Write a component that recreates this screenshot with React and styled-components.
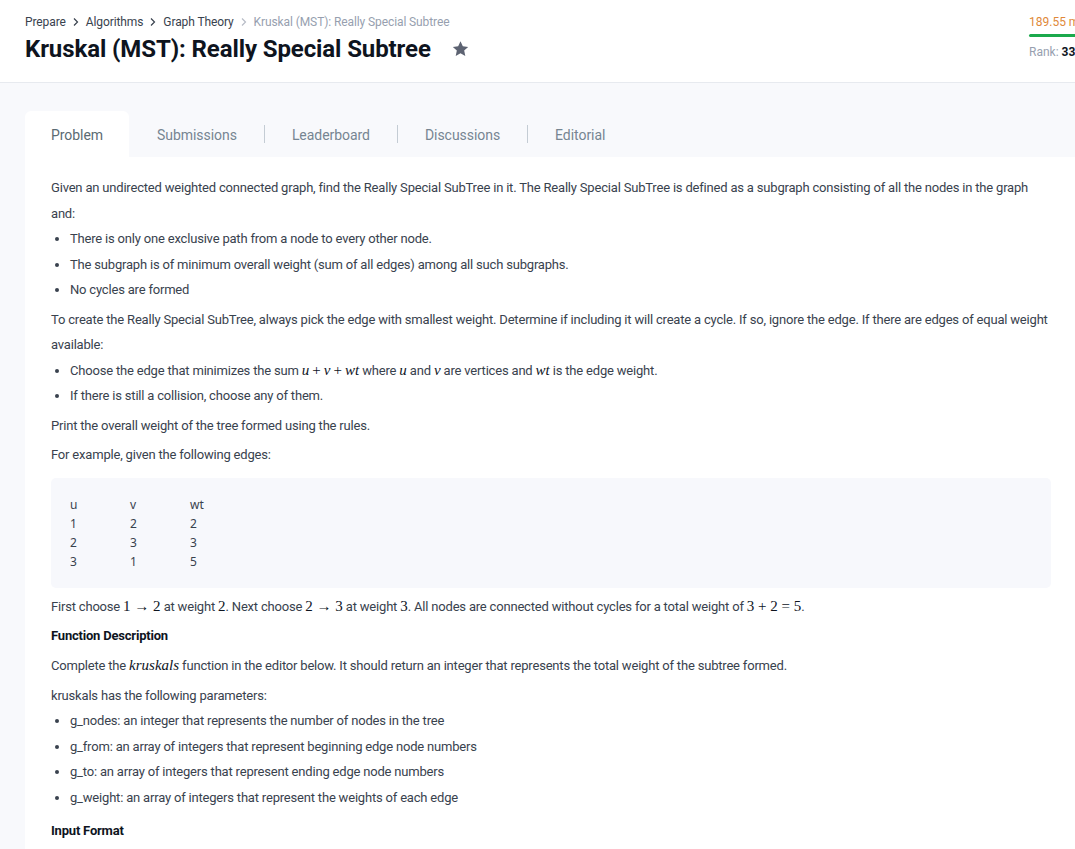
import React from "react";
import styled, { createGlobalStyle } from "styled-components";

const Global = createGlobalStyle`
  html, body { margin: 0; padding: 0; }
  body {
    background: #f8f9fc;
    overflow: hidden;
    font-family: Roboto, "Liberation Sans", sans-serif;
    color: #39424e;
    -webkit-font-smoothing: antialiased;
  }
`;

const Page = styled.div`
  width: 1160px;
  min-height: 849px;
  display: flex;
  flex-direction: column;
`;

const Header = styled.header`
  background: #fff;
  border-bottom: 1px solid #e7eaef;
  height: 83px;
  box-sizing: border-box;
  display: flex;
  justify-content: space-between;
  padding: 14px 0 0 25px;
`;

const HeadLeft = styled.div`
  display: flex;
  flex-direction: column;
  gap: 4px;
`;

const Crumbs = styled.nav`
  display: flex;
  align-items: center;
  gap: 6px;
  font-size: 12px;
  line-height: 16px;
  color: #39424e;
  letter-spacing: -0.1px;
`;

const Crumb = styled.span`
  color: ${(p) => (p.$current ? "#979faf" : "#39424e")};
`;

const Chevron = styled.span`
  display: inline-flex;
  color: ${(p) => (p.$light ? "#b7bcc6" : "#39424e")};
`;

const TitleRow = styled.div`
  display: flex;
  align-items: center;
  gap: 20px;
`;

const Title = styled.h1`
  margin: 0;
  font-size: 24px;
  line-height: 30px;
  font-weight: 700;
  color: #0e141e;
  letter-spacing: -0.1px;
`;

const Score = styled.div`
  width: 131px;
  display: flex;
  flex-direction: column;
`;

const Points = styled.div`
  font-size: 12px;
  line-height: 16px;
  color: #e0893a;
`;

const Bar = styled.div`
  height: 3px;
  border-radius: 2px;
  background: #1ba94c;
  margin: 4px 0 7px;
`;

const Rank = styled.div`
  font-size: 12px;
  line-height: 16px;
  color: #979faf;
  b { color: #0e141e; font-weight: 700; }
`;

const Main = styled.main`
  flex: 1;
  padding: 28px 0 0 25px;
  display: flex;
  flex-direction: column;
`;

const Tabs = styled.div`
  display: flex;
  align-items: center;
  height: 46px;
`;

const Tab = styled.div`
  height: 46px;
  display: flex;
  align-items: center;
  padding: 2px ${(p) => (p.$active ? 26 : 27)}px 0;
  font-size: 14px;
  letter-spacing: -0.05px;
  color: ${(p) => (p.$active ? "#5b6b73" : "#768592")};
  background: ${(p) => (p.$active ? "#fff" : "transparent")};
  border-radius: 6px 6px 0 0;
  box-sizing: border-box;
`;

const Sep = styled.span`
  width: 1px;
  height: 18px;
  background: ${(p) => (p.$hidden ? "transparent" : "#c4ccd4")};
`;

const Panel = styled.section`
  background: #fff;
  width: 1052px;
  flex: 1;
  padding: 18px 26px 40px;
  box-sizing: border-box;
  font-size: 13px;
  line-height: 25.5px;
  letter-spacing: -0.19px;
  color: #39424e;
`;

const Para = styled.p`
  margin: 0 0 ${(p) => (p.$tight ? 0 : 4)}px;
`;

const Heading = styled.h3`
  margin: ${(p) => (p.$spaced ? 8 : 0)}px 0 5px;
  font-size: 13px;
  line-height: 25px;
  font-weight: 700;
  color: #0e141e;
  letter-spacing: -0.2px;
`;

const List = styled.ul`
  margin: 0 0 4px;
  padding-left: 19px;
`;

const M = styled.span`
  font-family: "Liberation Serif", "DejaVu Serif", serif;
  font-style: ${(p) => (p.$upright ? "normal" : "italic")};
  font-size: 15px;
  letter-spacing: 0;
  color: #0e141e;
`;

const Code = styled.div`
  background: #f7f8fc;
  border-radius: 5px;
  padding: 17px 19px 17px;
  margin: 10px 0 6px;
  display: grid;
  grid-template-columns: repeat(3, 60px);
  font-family: "Noto Sans", "Open Sans", sans-serif;
  font-size: 12px;
  line-height: 19px;
  letter-spacing: 0;
  color: #39424e;
`;

const Star = () => (
  <svg width="19" height="18" viewBox="0 0 24 24" aria-hidden="true">
    <path
      fill="#5d6372"
      d="M12 1.8l3.1 6.6 7.1.8-5.3 4.9 1.5 7.1L12 17.6l-6.4 3.6 1.5-7.1L1.8 9.2l7.1-.8z"
    />
  </svg>
);

const Chev = ({ light }) => (
  <Chevron $light={light}>
    <svg width="8" height="10" viewBox="0 0 8 10" aria-hidden="true">
      <path d="M2 1.5 5.5 5 2 8.5" fill="none" stroke="currentColor" strokeWidth="1.2" />
    </svg>
  </Chevron>
);

const rows = [
  ["u", "v", "wt"],
  ["1", "2", "2"],
  ["2", "3", "3"],
  ["3", "1", "5"],
];

export default function App() {
  return (
    <Page>
      <Global />
      <Header>
        <HeadLeft>
          <Crumbs>
            <Crumb>Prepare</Crumb>
            <Chev />
            <Crumb>Algorithms</Crumb>
            <Chev />
            <Crumb>Graph Theory</Crumb>
            <Chev light />
            <Crumb $current>Kruskal (MST): Really Special Subtree</Crumb>
          </Crumbs>
          <TitleRow>
            <Title>Kruskal (MST): Really Special Subtree</Title>
            <Star />
          </TitleRow>
        </HeadLeft>
        <Score>
          <Points>189.55 more points</Points>
          <Bar />
          <Rank>
            Rank: <b>338204</b>
          </Rank>
        </Score>
      </Header>
      <Main>
        <Tabs>
          <Tab $active>Problem</Tab>
          <Sep $hidden />
          <Tab>Submissions</Tab>
          <Sep />
          <Tab>Leaderboard</Tab>
          <Sep />
          <Tab>Discussions</Tab>
          <Sep />
          <Tab>Editorial</Tab>
        </Tabs>
        <Panel>
          <Para $tight>
            Given an undirected weighted connected graph, find the Really Special SubTree in it. The Really Special
            SubTree is defined as a subgraph consisting of all the nodes in the graph and:
          </Para>
          <List>
            <li>There is only one exclusive path from a node to every other node.</li>
            <li>The subgraph is of minimum overall weight (sum of all edges) among all such subgraphs.</li>
            <li>No cycles are formed</li>
          </List>
          <Para $tight>
            To create the Really Special SubTree, always pick the edge with smallest weight. Determine if including it
            will create a cycle. If so, ignore the edge. If there are edges of equal weight available:
          </Para>
          <List>
            <li>
              Choose the edge that minimizes the sum <M>u</M> <M $upright>+</M> <M>v</M> <M $upright>+</M> <M>wt</M>{" "}
              where <M>u</M> and <M>v</M> are vertices and <M>wt</M> is the edge weight.
            </li>
            <li>If there is still a collision, choose any of them.</li>
          </List>
          <Para>Print the overall weight of the tree formed using the rules.</Para>
          <Para>For example, given the following edges:</Para>
          <Code>
            {rows.flat().map((c, i) => (
              <span key={i}>{c}</span>
            ))}
          </Code>
          <Para>
            First choose <M $upright>1 → 2</M> at weight <M $upright>2</M>. Next choose <M $upright>2 → 3</M> at weight{" "}
            <M $upright>3</M>. All nodes are connected without cycles for a total weight of <M $upright>3 + 2 = 5</M>.
          </Para>
          <Heading>Function Description</Heading>
          <Para>
            Complete the <M>kruskals</M> function in the editor below. It should return an integer that represents the
            total weight of the subtree formed.
          </Para>
          <Para $tight>kruskals has the following parameters:</Para>
          <List>
            <li>g_nodes: an integer that represents the number of nodes in the tree</li>
            <li>g_from: an array of integers that represent beginning edge node numbers</li>
            <li>g_to: an array of integers that represent ending edge node numbers</li>
            <li>g_weight: an array of integers that represent the weights of each edge</li>
          </List>
          <Heading $spaced>Input Format</Heading>
        </Panel>
      </Main>
    </Page>
  );
}
